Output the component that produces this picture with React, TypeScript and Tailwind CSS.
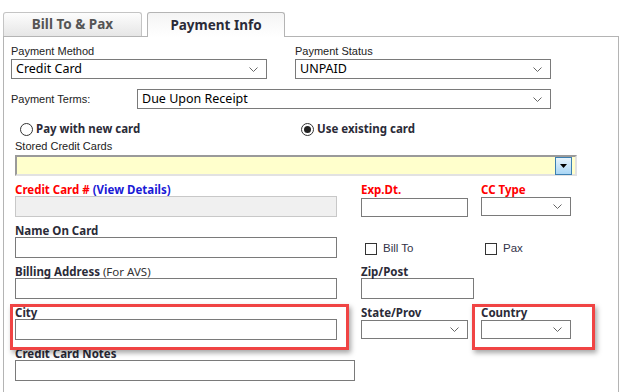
import React from 'react';

const sans = { fontFamily: '"Noto Sans", "Liberation Sans", Arial, sans-serif' };
const arial = { fontFamily: '"Liberation Sans", Arial, sans-serif' };

function Chevron() {
  return (
    <svg width="9" height="5" viewBox="0 0 9 5" className="shrink-0">
      <path d="M0.5 0.5 L4.5 4.5 L8.5 0.5" fill="none" stroke="#666" strokeWidth="1" />
    </svg>
  );
}

function Select({ value, className }: { value?: string; className: string }) {
  return (
    <div
      className={`flex items-center justify-between border border-[#7a7a7a] bg-white pl-[4px] pr-[8px] text-[12.5px] text-black ${className}`}
      style={sans}
    >
      <span className="leading-none">{value}</span>
      <Chevron />
    </div>
  );
}

function Input({ className }: { className: string }) {
  return <div className={`border border-[#7a7a7a] bg-white ${className}`} />;
}

function Label({ children, className = '' }: { children: React.ReactNode; className?: string }) {
  return (
    <div className={`h-[13px] text-[11.5px] font-bold leading-[13px] text-[#2b2b38] ${className}`} style={sans}>
      {children}
    </div>
  );
}

function Radio({ checked, label }: { checked?: boolean; label: string }) {
  return (
    <div className="flex items-center gap-[3px]">
      <span className="flex h-[13px] w-[13px] items-center justify-center rounded-full border border-[#333] bg-white">
        {checked && <span className="h-[7px] w-[7px] rounded-full bg-[#222]" />}
      </span>
      <span className="text-[11.5px] font-bold leading-none text-[#2b2b38]" style={sans}>
        {label}
      </span>
    </div>
  );
}

function Check({ label }: { label: string }) {
  return (
    <div className="flex items-center gap-[6px]">
      <span className="h-[12px] w-[12px] border border-[#333] bg-white" />
      <span className="text-[11.5px] leading-none text-[#333348]" style={arial}>
        {label}
      </span>
    </div>
  );
}

export default function App() {
  return (
    <div className="relative h-[392px] w-[628px] overflow-hidden bg-white pl-[3px] pt-[12px]">
      {/* tabs */}
      <div className="flex h-[24px] items-end gap-[5px]">
        <div
          className="flex h-[24px] w-[139px] items-center justify-center rounded-t-[3px] border border-b-0 border-[#c4c4c4] bg-gradient-to-b from-[#fdfdfd] to-[#e6e6e6] text-[13.5px] font-bold text-[#555]"
          style={sans}
        >
          Bill To &amp; Pax
        </div>
        <div
          className="relative z-10 -mb-px flex h-[25px] w-[138px] items-center justify-center rounded-t-[3px] border border-b-0 border-[#b4b4b4] bg-gradient-to-b from-[#f4f4f4] to-white text-[13.5px] font-bold text-[#2b2b38]"
          style={sans}
        >
          Payment Info
        </div>
      </div>

      {/* panel */}
      <div className="h-[400px] w-[616px] border border-b-0 border-[#b4b4b4]">
        {/* payment method / status */}
        <div className="ml-[7px] mt-[7px] flex gap-[28px]">
          <div className="w-[256px]">
            <div className="h-[15px] text-[11px] leading-[15px] text-[#222]" style={arial}>
              Payment Method
            </div>
            <Select value="Credit Card" className="h-[20px] w-[256px]" />
          </div>
          <div className="w-[256px]">
            <div className="h-[15px] text-[11px] leading-[15px] text-[#222]" style={arial}>
              Payment Status
            </div>
            <Select value="UNPAID" className="h-[20px] w-[256px]" />
          </div>
        </div>

        {/* payment terms */}
        <div className="ml-[7px] mt-[10px] flex items-center">
          <div className="w-[126px] text-[11px] text-[#222]" style={arial}>
            Payment Terms:
          </div>
          <Select value="Due Upon Receipt" className="h-[20px] w-[414px]" />
        </div>

        {/* radios */}
        <div className="ml-[16px] mt-[12px] flex h-[16px] items-center">
          <div className="w-[281px]">
            <Radio label="Pay with new card" />
          </div>
          <Radio checked label="Use existing card" />
        </div>

        <div className="ml-[11px]">
          {/* stored cards */}
          <div className="mt-[3px] h-[15px] text-[11px] leading-[13px] text-[#222]" style={arial}>
            Stored Credit Cards
          </div>
          <div className="flex h-[21px] w-[562px] items-center justify-end border-2 border-b-[#e2e2e2] border-l-[#9a9a9a] border-r-[#e2e2e2] border-t-[#9a9a9a] bg-[#ffffcc] pr-[3px]">
            <div className="flex h-[18px] w-[17px] items-center justify-center border border-[#3c7fb1] bg-gradient-to-b from-[#e8f4fc] to-[#a9d6f5]">
              <svg width="7" height="4" viewBox="0 0 7 4">
                <path d="M0 0 H7 L3.5 4 Z" fill="#000" />
              </svg>
            </div>
          </div>

          {/* credit card # */}
          <div className="mt-[7px] flex">
            <div className="w-[346px]">
              <Label className="text-[#ff0000]">
                Credit Card # <span className="text-[#1a1ad6]">(View Details)</span>
              </Label>
              <div className="h-[21px] w-[322px] border border-[#c8c8c8] bg-[#f0f0f0]" />
            </div>
            <div className="w-[120px]">
              <Label className="text-[#ff0000]">Exp.Dt.</Label>
              <Input className="mt-[2px] h-[19px] w-[107px]" />
            </div>
            <div>
              <Label className="text-[#ff0000]">CC Type</Label>
              <Select className="mt-px h-[19px] w-[90px]" />
            </div>
          </div>

          {/* name on card */}
          <div className="mt-[7px] flex">
            <div className="w-[346px]">
              <Label>Name On Card</Label>
              <Input className="h-[21px] w-[322px]" />
            </div>
            <div className="w-[120px] pl-[4px] pt-[19px]">
              <Check label="Bill To" />
            </div>
            <div className="pl-[4px] pt-[19px]">
              <Check label="Pax" />
            </div>
          </div>

          {/* billing / zip */}
          <div className="mt-[7px] flex">
            <div className="w-[346px]">
              <Label>
                Billing Address <span className="font-normal text-[#333]">(For AVS)</span>
              </Label>
              <Input className="h-[21px] w-[322px]" />
            </div>
            <div>
              <Label>Zip/Post</Label>
              <Input className="h-[21px] w-[113px]" />
            </div>
          </div>

          {/* city / state / country */}
          <div className="mt-[7px] flex">
            <div className="w-[346px]">
              <Label>City</Label>
              <Input className="h-[21px] w-[322px]" />
            </div>
            <div className="w-[120px]">
              <Label>State/Prov</Label>
              <Select className="mt-px h-[19px] w-[107px]" />
            </div>
            <div>
              <Label>Country</Label>
              <Select className="mt-px h-[19px] w-[90px]" />
            </div>
          </div>

          {/* notes */}
          <div className="mt-[7px]">
            <Label>Credit Card Notes</Label>
            <Input className="h-[21px] w-[340px]" />
          </div>
        </div>
      </div>

      {/* annotation highlights */}
      <div className="pointer-events-none absolute left-[10px] top-[304px] h-[46px] w-[339px] border-[3px] border-[#f04444] shadow-[2px_3px_5px_rgba(0,0,0,0.35)]" />
      <div className="pointer-events-none absolute left-[472px] top-[304px] h-[46px] w-[123px] border-[3px] border-[#f04444] shadow-[2px_3px_5px_rgba(0,0,0,0.35)]" />
    </div>
  );
}
